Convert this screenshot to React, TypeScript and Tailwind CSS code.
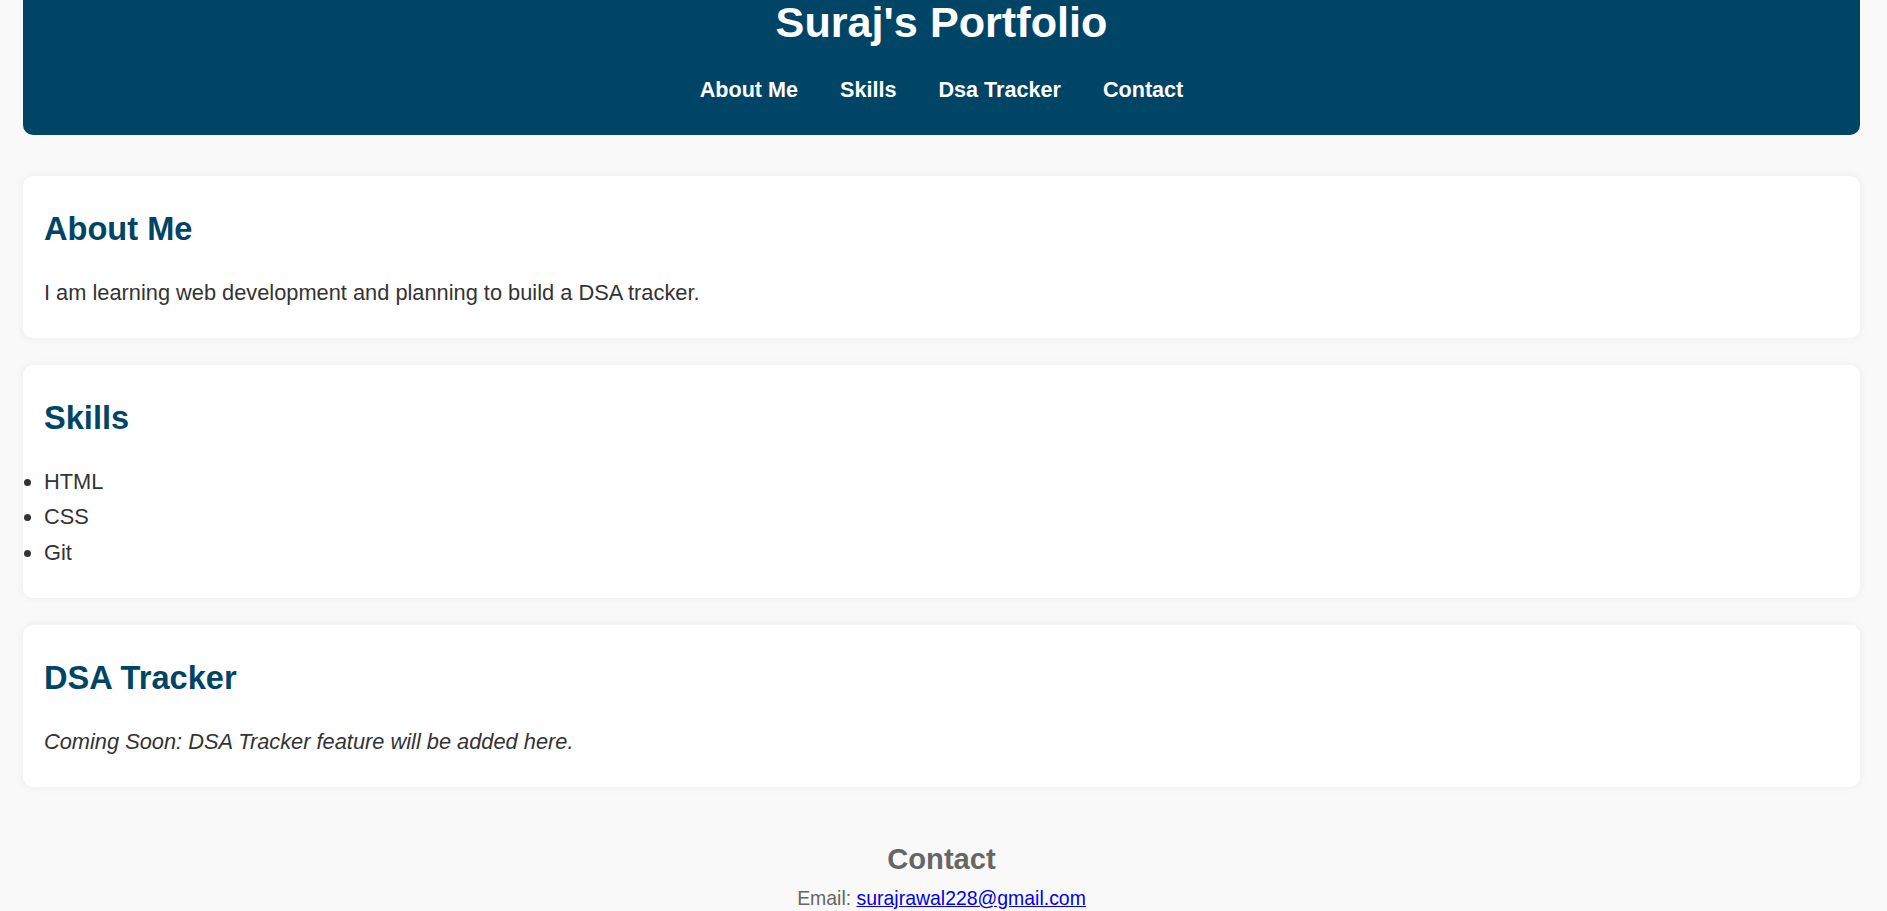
const links = ["About Me", "Skills", "Dsa Tracker", "Contact"];
const skills = ["HTML", "CSS", "Git"];

function Card({ title, children }: { title: string; children: React.ReactNode }) {
  return (
    <section className="bg-white rounded-[10px] shadow-[0_0_10px_rgba(0,0,0,0.06)] px-[21px] pt-[34px] pb-[28px]">
      <h2 className="text-[32.6px] leading-[38px] font-bold text-[#004466] mb-[27px]">{title}</h2>
      {children}
    </section>
  );
}

export default function App() {
  return (
    <div className="min-h-screen bg-[#f9f9f9] text-[#333] font-['Liberation_Sans',Arial,sans-serif] pl-[23px] pr-[27px] pb-[40px]">
      <header className="bg-[#004466] text-white rounded-b-[10px] flex flex-col items-center pb-[33px]">
        <h1 className="text-[43.2px] leading-[44px] font-bold">Suraj's Portfolio</h1>
        <nav className="flex gap-[42px] mt-[33px] text-[21.6px] leading-[25px] font-bold">
          {links.map((l) => (
            <a key={l} href="#" className="text-white">
              {l}
            </a>
          ))}
        </nav>
      </header>

      <main className="flex flex-col gap-[27px] mt-[41px]">
        <Card title="About Me">
          <p className="text-[21.8px] leading-[35px]">
            I am learning web development and planning to build a DSA tracker.
          </p>
        </Card>
        <Card title="Skills">
          <ul className="list-disc pl-0 text-[21.8px] leading-[35.3px]">
            {skills.map((s) => (
              <li key={s}>{s}</li>
            ))}
          </ul>
        </Card>
        <Card title="DSA Tracker">
          <p className="text-[21.8px] leading-[35px] italic">
            Coming Soon: DSA Tracker feature will be added here.
          </p>
        </Card>
      </main>

      <footer className="mt-[55px] flex flex-col items-center text-[#666]">
        <h2 className="text-[29.16px] leading-[34px] font-bold">Contact</h2>
        <p className="text-[19.44px] leading-[23px] mt-[11px]">
          Email:{" "}
          <a href="#" className="text-[#0000ee] underline">
            surajrawal228@gmail.com
          </a>
        </p>
      </footer>
    </div>
  );
}
